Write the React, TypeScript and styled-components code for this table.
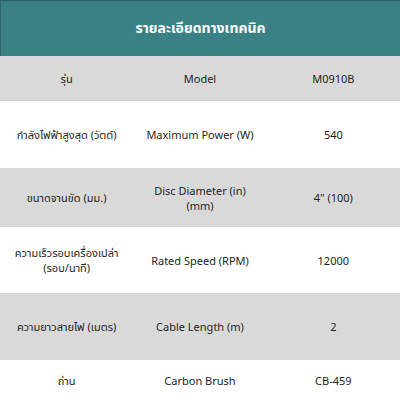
import React from "react";
import styled, { createGlobalStyle } from "styled-components";

interface ISpec {
  th: string;
  en: string;
  value: string;
  height: number;
}

const specs: ISpec[] = [
  { th: "รุ่น", en: "Model", value: "M0910B", height: 45 },
  { th: "กำลังไฟฟ้าสูงสุด (วัตต์)", en: "Maximum Power (W)", value: "540", height: 67 },
  { th: "ขนาดจานขัด (มม.)", en: "Disc Diameter (in) (mm)", value: "4\" (100)", height: 59 },
  { th: "ความเร็วรอบเครื่องเปล่า (รอบ/นาที)", en: "Rated Speed (RPM)", value: "12000", height: 66 },
  { th: "ความยาวสายไฟ (เมตร)", en: "Cable Length (m)", value: "2", height: 67 },
  { th: "ถ่าน", en: "Carbon Brush", value: "CB-459", height: 40 },
];

const GlobalStyle = createGlobalStyle`
  body {
    margin: 0;
    background: #ffffff;
    font-family: "Noto Sans", "Noto Sans Thai", "Liberation Sans", sans-serif;
  }
`;

const Table = styled.div`
  width: 400px;
  display: flex;
  flex-direction: column;
`;

const Header = styled.div`
  height: 56px;
  box-sizing: border-box;
  background: #3a8185;
  border-top: 1px solid #2c6467;
  border-left: 1px solid #2c6467;
  display: flex;
  align-items: center;
  justify-content: center;
  padding-bottom: 1px;
  color: #ffffff;
  font-size: 14px;
  font-weight: 700;
`;

const Row = styled.div<{ $shaded: boolean; $height: number }>`
  height: ${(p) => p.$height}px;
  display: grid;
  grid-template-columns: repeat(3, 1fr);
  align-items: center;
  background: ${(p) => (p.$shaded ? "#d9d9d9" : "#ffffff")};
`;

const Cell = styled.div`
  text-align: center;
  font-size: 11px;
  line-height: 15px;
  color: #1e1e1e;
  padding: 0 12px;
`;

export default function App() {
  return (
    <>
      <GlobalStyle />
      <Table>
        <Header>รายละเอียดทางเทคนิค</Header>
        {specs.map((s, i) => (
          <Row key={s.en} $shaded={i % 2 === 0} $height={s.height}>
            <Cell>{s.th}</Cell>
            <Cell>{s.en}</Cell>
            <Cell>{s.value}</Cell>
          </Row>
        ))}
      </Table>
    </>
  );
}
